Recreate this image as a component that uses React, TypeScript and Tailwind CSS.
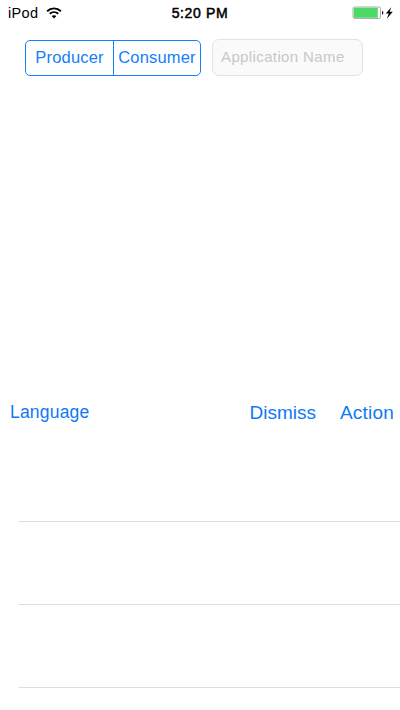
function WifiIcon() {
  return (
    <svg className="ml-[8px] h-[12px] w-[16px]" viewBox="0 0 16 12" fill="none" stroke="#000" strokeWidth="1.9">
      <path d="M1.1 4.2C5 .4 11 .4 14.9 4.2" />
      <path d="M3.7 6.8c2.5-2.3 6.1-2.3 8.6 0" />
      <path d="M8 11.6 5.6 9.1c1.4-1.2 3.4-1.2 4.800 0Z" fill="#000" stroke="none" />
    </svg>
  );
}

function BatteryIcon() {
  return (
    <svg className="h-[14px] w-[44px]" viewBox="0 0 44 14">
      <rect x="1" y="1" width="27.5" height="11.5" rx="1.7" fill="#fff" stroke="#888" strokeWidth="0.7" />
      <rect x="1.8" y="1.800" width="24" height="9.900" rx="0.5" fill="#4cd964" />
      <path d="M30 5h.6c1 .5 1 3 0 3.500H30Z" fill="#222" />
      <path d="m39.300 1.200-5.500 6.300h3l-2 5.200 6-7h-3.200Z" fill="#000" />
    </svg>
  );
}

function StatusBar() {
  return (
    <header className="grid h-[26px] grid-cols-3 items-center text-[14.5px] leading-none text-black">
      <div className="flex items-center pl-[8px]">
        <span className="tracking-[0.35px]">iPod</span>
        <WifiIcon />
      </div>
      <span className="text-center text-[14px] tracking-[0.65px] [-webkit-text-stroke:0.5px_#000]">5:20 PM</span>
      <div className="flex justify-end pr-[4px]">
        <BatteryIcon />
      </div>
    </header>
  );
}

function ModeSwitch() {
  return (
    <div className="mt-[2px] flex h-[36px] w-[176px] overflow-hidden rounded-[5px] border border-[#147efb] text-[16.5px] tracking-[0.17px] text-[#147efb]">
      <button className="w-[88px] border-r border-[#147efb] pb-px">Producer</button>
      <button className="flex-1 pb-px">Consumer</button>
    </div>
  );
}

export default function App() {
  return (
    <main className="flex h-[710px] w-[400px] flex-col overflow-hidden bg-white font-['Liberation_Sans',Arial,sans-serif]">
      <StatusBar />
      <section className="mt-[12px] flex h-[39px] gap-[11px] pl-[25px]">
        <ModeSwitch />
        <input
          className="mt-px h-[37px] w-[151px] rounded-[7px] border border-[#e3e3e3] bg-[#fafafa] px-[8px] pb-[2px] text-[15px] tracking-[0.38px] outline-none placeholder:text-[#c7c7cc]"
          placeholder="Application Name"
        />
      </section>
      <section className="mt-[317px] flex h-[38px] items-center pl-[10px] pr-[6px] text-[#0f78f5]">
        <button className="pb-px text-[17.5px] tracking-[0.2px]">Language</button>
        <button className="ml-auto text-[19px]">Dismiss</button>
        <button className="ml-[24px] text-[19px] tracking-[0.2px]">Action</button>
      </section>
      <ul className="mt-[7px] pl-[19px]">
        <li className="h-[83px] border-b border-[#dedede]" />
        <li className="h-[83px] border-b border-[#dedede]" />
        <li className="h-[83px] border-b border-[#dedede]" />
      </ul>
    </main>
  );
}
